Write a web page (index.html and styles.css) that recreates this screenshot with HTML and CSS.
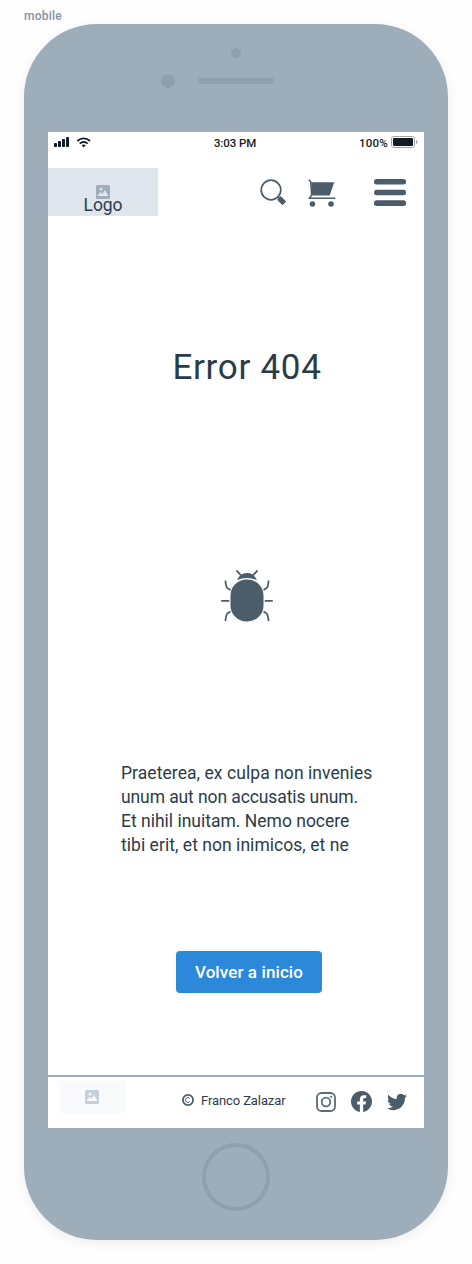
FILE: index.html
```html
<!DOCTYPE html>
<html lang="es">
<head>
<meta charset="utf-8">
<title>Error 404</title>
<link rel="stylesheet" href="styles.css">
</head>
<body>
<div class="frame-label">mobile</div>
<div class="phone">
  <div class="phone-top">
    <svg width="424" height="108" viewBox="0 0 424 108" fill="#8f9fae"><circle cx="212" cy="29" r="5"/><circle cx="144" cy="57" r="7"/><rect x="174" y="54" width="76" height="6" rx="3"/></svg>
  </div>
  <div class="screen">
    <div class="status">
      <svg class="signal" width="40" height="12" viewBox="0 0 40 12" fill="#101c26"><rect x="0" y="7" width="3" height="4" rx=".7"/><rect x="4" y="5" width="3" height="6" rx=".7"/><rect x="8" y="3" width="3" height="8" rx=".7"/><rect x="12" y="1" width="3" height="10" rx=".7"/><g fill="none" stroke="#101c26" stroke-width="1.8"><path d="M23.400 5a9 9 0 0 1 12.600 0"/><path d="M25.800 7.600a5.500 5.500 0 0 1 7.800 0"/></g><path d="M27.700 9.200q2-1.500 4 0L29.700 11.400Z"/></svg>
      <span class="time">3:03 PM</span>
      <span class="power"><span class="pct">100%</span><svg width="27" height="12" viewBox="0 0 27 12"><rect x=".5" y=".5" width="23" height="11" rx="2.2" fill="none" stroke="#a0a4a8"/><rect x="2" y="2" width="20" height="8" rx="1" fill="#101c26"/><path d="M25 4v4q1.500-.6 1.500-2T25 4Z" fill="#a0a4a8"/></svg></span>
    </div>
    <header class="header">
      <div class="logo"><svg width="14" height="14" viewBox="0 0 14 14"><rect width="14" height="14" rx="1.500" fill="#9eadba"/><circle cx="5" cy="3.900" r="1.500" fill="#dfe6ee"/><path d="M1.500 11 4.300 7l2 2L9 5l3.600 6Z" fill="#dfe6ee"/></svg><span class="logo-text">Logo</span></div>
      <svg class="search" width="27" height="28" viewBox="0 0 27 28"><circle cx="11" cy="11" r="9.800" fill="none" stroke="#4b5d6b" stroke-width="1.700"/><path d="m17.700 17.700 2 2" stroke="#4b5d6b" stroke-width="1.700"/><path d="m18.900 18.900 5.400 5.400" stroke="#4b5d6b" stroke-width="5.200"/></svg>
      <svg class="cart" width="28" height="28" viewBox="0 0 28 28" fill="#4b5d6b"><path d="M3.200 3.300h23l-4.500 13.300H4.200Z"/><path d="M.7.800 2.700 2.700 3.700 16 1.500 19.200h25.800" fill="none" stroke="#4b5d6b" stroke-width="1.500"/><circle cx="4.500" cy="25" r="2.800"/><circle cx="23" cy="25" r="2.800"/></svg>
      <svg class="menu" width="32" height="28" viewBox="0 0 32 28" fill="#4b5d6b"><rect y="0" width="32" height="5.600" rx="2.500"/><rect y="10.700" width="32" height="5.600" rx="2.500"/><rect y="21.300" width="32" height="5.600" rx="2.500"/></svg>
    </header>
    <main class="main">
      <h1 class="title">Error 404</h1>
      <svg class="bug" width="52" height="52" viewBox="0 0 52 52"><rect x="9.500" y="9.500" width="33" height="42" rx="16" fill="#4b5d6b"/><path d="M16 10.300Q19 3 26 3t10 7.300Q26 5.500 16 10.300Z" fill="#4b5d6b"/><path d="m15.500.400 4.500 5M36.500.400l-4.500 5M4.400 10.500Q5 17 6.300 18L9.500 20M47.600 10.500Q47 17 45.700 18L42.500 20M.2 30.800h8M43.800 30.800h8M9.500 41.500 6.300 43.500Q5 45 4.400 51M42.500 41.500 45.700 43.500Q47 45 47.600 51" fill="none" stroke="#4b5d6b" stroke-width="1.800"/></svg>
      <p class="copy"><span class="l1">Praeterea, ex culpa non invenies</span><br><span class="l2">unum aut non accusatis unum.</span><br><span class="l3">Et nihil inuitam. Nemo nocere</span><br><span class="l4">tibi erit, et non inimicos, et ne</span></p>
      <button class="button">Volver a inicio</button>
    </main>
    <footer class="footer">
      <div class="footer-logo"><svg width="14" height="14" viewBox="0 0 14 14"><rect width="14" height="14" rx="1.500" fill="#c3d0dc"/><circle cx="5" cy="3.900" r="1.500" fill="#f8fafc"/><path d="M1.500 11 4.300 7l2 2L9 5l3.600 6Z" fill="#f8fafc"/></svg></div>
      <svg class="copyright" width="12" height="12" viewBox="0 0 12 12" fill="none" stroke="#4b5d6b"><circle cx="6" cy="6" r="5.100" stroke-width="1.800"/><path d="M7.800 4.500a2.400 2.400 0 1 0 0 3" stroke-width="1"/></svg>
      <span class="author">Franco Zalazar</span>
      <svg class="social instagram" width="20" height="20" viewBox="0 0 20 20" fill="none" stroke="#5b6c79"><rect x="1" y="1" width="18" height="18" rx="4.500" stroke-width="1.800"/><circle cx="10" cy="10" r="4.300" stroke-width="1.800"/><circle cx="15.200" cy="4.800" r="1.100" fill="#5b6c79" stroke="none"/></svg>
      <svg class="social facebook" width="21" height="21" viewBox="0 0 24 24"><path fill="#4b5d6b" d="M24 12.070C24 5.440 18.630.070 12 .070S0 5.440 0 12.070c0 5.990 4.390 10.950 10.130 11.850v-8.380H7.080v-3.470h3.050V9.430c0-3.010 1.790-4.670 4.530-4.670 1.310 0 2.690.230 2.690.230v2.950h-1.510c-1.490 0-1.960.930-1.960 1.870v2.260h3.330l-.530 3.470h-2.800v8.380C19.610 23.020 24 18.060 24 12.070Z"/></svg>
      <svg class="social twitter" width="20" height="20" viewBox="0 0 24 24"><path fill="#4b5d6b" d="M23.950 4.570a10 10 0 0 1-2.820.770 4.960 4.960 0 0 0 2.160-2.720c-.950.560-2 .960-3.130 1.190a4.920 4.920 0 0 0-8.380 4.480C7.690 8.090 4.070 6.130 1.640 3.160a4.820 4.820 0 0 0-.670 2.480c0 1.710.870 3.210 2.190 4.100a4.900 4.900 0 0 1-2.230-.620v.060a4.920 4.920 0 0 0 3.950 4.830 5 5 0 0 1-2.210.080 4.940 4.940 0 0 0 4.600 3.420A9.870 9.870 0 0 1 0 19.540a14 14 0 0 0 7.550 2.210c9.050 0 14-7.500 14-13.980 0-.210 0-.420-.020-.630a9.940 9.940 0 0 0 2.460-2.550Z"/></svg>
    </footer>
  </div>
  <div class="home"></div>
</div>
</body>
</html>
```
FILE: styles.css
```css
* { box-sizing: border-box; }
body { margin: 0; height: 1264px; background: #fefefe; color: #2b3b49; font-family: Roboto, "Liberation Sans", sans-serif; overflow: hidden; }
svg { display: block; flex: none; }
.frame-label { height: 24px; padding: 8px 0 0 24px; font-size: 12px; line-height: 16px; font-weight: 500; letter-spacing: .25px; color: #8493a2; }
.phone { width: 424px; height: 1216px; margin-left: 24px; border-radius: 73px; background: #9eadba; box-shadow: 0 3px 12px rgba(0,0,0,.07); }
.phone-top { height: 108px; }
.screen { width: 376px; height: 996px; margin: 0 24px; background: #fff; display: flex; flex-direction: column; }
.status { height: 36px; padding: 4px 6px 0; display: grid; grid-template-columns: 1fr auto 1fr; align-items: start; color: #101c26; font-size: 11.500px; line-height: 14px; font-weight: 500; }
.time { position: relative; left: -1px; letter-spacing: -.1px; }
.power { display: flex; justify-content: flex-end; gap: 3px; }
.pct { letter-spacing: .2px; }
.header { height: 48px; display: flex; align-items: flex-start; }
.logo { width: 110px; height: 48px; padding-top: 17px; display: flex; flex-direction: column; align-items: center; background: #dfe6ee; }
.logo-text { margin-top: -4px; font-size: 17.500px; line-height: 20px; letter-spacing: -.1px; }
.search { margin: 11px 0 0 102px; }
.cart { margin: 11px 0 0 21px; }
.menu { margin: 11px 0 0 38px; }
.main { height: 859px; padding-left: 22px; display: flex; flex-direction: column; align-items: center; }
.title { margin: 130px 0 0; font-size: 35px; line-height: 44px; font-weight: 400; letter-spacing: .7px; }
.bug { margin-top: 180px; }
.copy { width: 252px; margin: 139px 0 0; font-size: 17.500px; line-height: 24px; white-space: nowrap; }
.l1 { letter-spacing: .065px; }
.l2 { letter-spacing: -.1px; }
.l4 { letter-spacing: .04px; }
.button { width: 146px; height: 42px; margin: 94px 0 0 4px; padding: 0; border: 0; border-radius: 4px; background: #2c88d9; color: #fff; font: 500 17px/42px Roboto, "Liberation Sans", sans-serif; letter-spacing: .1px; }
.footer { height: 53px; border-top: 2px solid #9eadba; display: flex; align-items: flex-start; }
.footer-logo { width: 65px; height: 32px; margin: 4px 0 0 12px; padding: 9px 1px 0 0; display: flex; justify-content: center; background: #f8fafc; }
.copyright { margin: 17px 0 0 57px; }
.author { width: 85px; margin: 15px 0 0 7px; font-size: 13px; line-height: 18px; letter-spacing: -.1px; white-space: nowrap; }
.social { margin-top: 15px; }
.instagram { margin-left: 30px; }
.facebook { margin: 14px 0 0 15px; }
.twitter { margin-left: 15px; }
.home { width: 68px; height: 68px; margin: 15px auto 0; border: 4px solid #8f9fae; border-radius: 50%; }
```
